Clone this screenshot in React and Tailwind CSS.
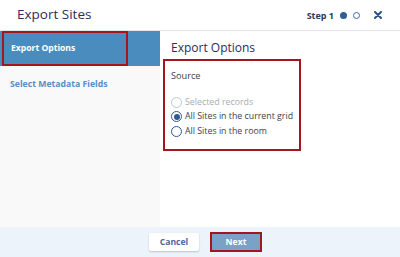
import React from "react";

function Radio({ state, label }) {
  const disabled = state === "disabled";
  const checked = state === "checked";
  return (
    <div className="flex h-[14.5px] items-center gap-[3px] whitespace-nowrap">
      <span
        className={
          "flex h-[11px] w-[11px] shrink-0 items-center justify-center rounded-full border bg-white " +
          (disabled ? "border-[#b9c9dd]" : "border-[#2f5b93]")
        }
      >
        {checked && <span className="h-[6px] w-[6px] rounded-full bg-[#2f5b93]" />}
      </span>
      <span className={"text-[8.8px] leading-none " + (disabled ? "text-[#a9adb5]" : "text-[#3a3f48]")}>
        {label}
      </span>
    </div>
  );
}

export default function App() {
  return (
    <div
      className="flex h-[257px] w-[400px] flex-col overflow-hidden bg-white"
      style={{ fontFamily: '"Open Sans", "Liberation Sans", sans-serif' }}
    >
      {/* Header */}
      <div className="flex h-[31px] shrink-0 items-center justify-between border-b border-[#e3e5ea] pl-[17px] pr-[18px]">
        <span className="text-[13.5px] leading-none text-[#2e2b5f]">Export Sites</span>
        <div className="flex items-center">
          <span className="text-[9px] font-bold leading-none text-[#2c3762]">Step 1</span>
          <span className="ml-[6px] h-[7px] w-[7px] rounded-full bg-[#2f5d94]" />
          <span className="ml-[6px] h-[7px] w-[7px] rounded-full border border-[#3a6aa4] bg-white" />
          <svg className="ml-[14px]" width="8" height="8" viewBox="0 0 8 8">
            <path d="M1 1 L7 7 M7 1 L1 7" stroke="#2c5284" strokeWidth="2" strokeLinecap="round" />
          </svg>
        </div>
      </div>

      {/* Body */}
      <div className="flex min-h-0 flex-1">
        <div className="flex w-[160px] shrink-0 flex-col bg-[#f9f9f9]">
          <div className="flex h-[35px] bg-[#4a8cbd] pl-[2px]">
            <div className="flex h-full w-[126px] items-center border-2 border-[#a1161f] pl-[7px]">
              <span className="text-[8.6px] font-bold leading-none text-white">Export Options</span>
            </div>
          </div>
          <div className="flex h-[35px] items-center pl-[10px] pt-[1px]">
            <span className="text-[8.7px] font-bold leading-none text-[#5a8dc4]">Select Metadata Fields</span>
          </div>
        </div>

        <div className="flex flex-1 flex-col pl-[3px] pt-[8px]">
          <div className="h-[18px] pl-[8px] text-[12px] leading-[18px] text-[#2b2c5c]">Export Options</div>
          <div className="mt-[2px] flex h-[92px] w-[138px] flex-col border-2 border-[#a1161f] px-[6px] pt-[8px]">
            <div className="h-[14px] text-[9.2px] leading-[14px] text-[#3a3f48]">Source</div>
            <div className="mt-[12px] flex flex-col">
              <Radio state="disabled" label="Selected records" />
              <Radio state="checked" label="All Sites in the current grid" />
              <Radio state="empty" label="All Sites in the room" />
            </div>
          </div>
        </div>
      </div>

      {/* Footer */}
      <div className="flex h-[30px] shrink-0 items-center justify-center gap-[11px] bg-[#edf3fa] pl-[11px]">
        <button className="flex h-[18px] w-[50px] items-center justify-center rounded-[2px] bg-white text-[8.6px] font-bold leading-none text-[#4a6b99] shadow-[0_1px_2px_rgba(0,0,0,0.2)]">
          Cancel
        </button>
        <button className="flex h-[20px] w-[52px] items-center justify-center border-2 border-[#a1161f] bg-[#7aa1c6] text-[8.6px] font-bold leading-none text-white">
          Next
        </button>
      </div>
    </div>
  );
}
